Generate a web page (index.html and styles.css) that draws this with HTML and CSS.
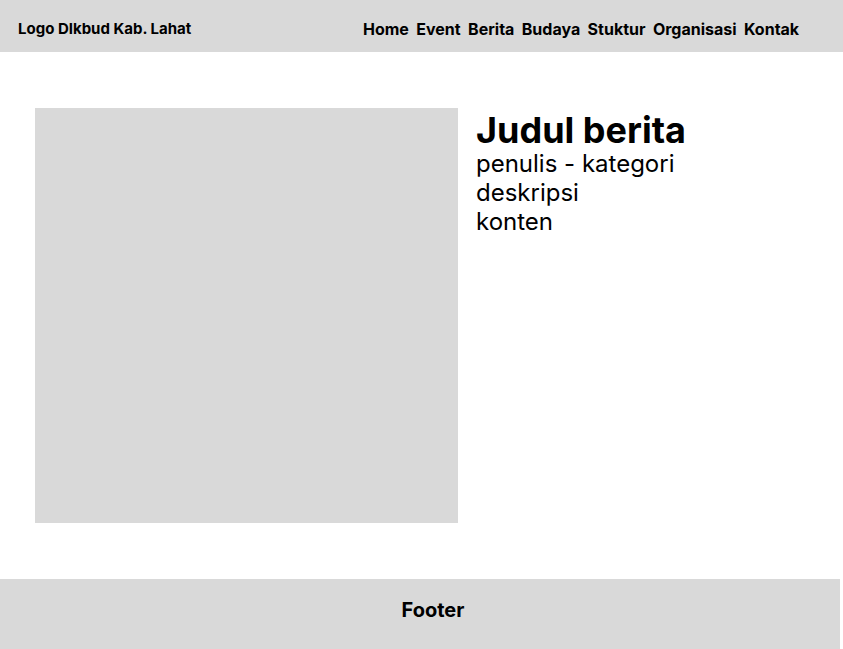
FILE: index.html
```html
<!DOCTYPE html>
<html lang="id">
<head>
<meta charset="utf-8">
<title>Berita - Disbud Kab. Lahat</title>
<link rel="stylesheet" href="styles.css">
</head>
<body>
<header class="topbar">
  <div class="logo">Logo DIkbud Kab. Lahat</div>
  <nav class="nav">
    <a href="#">Home</a>
    <a href="#">Event</a>
    <a href="#">Berita</a>
    <a href="#">Budaya</a>
    <a href="#">Stuktur</a>
    <a href="#">Organisasi</a>
    <a href="#">Kontak</a>
  </nav>
</header>
<main class="article">
  <div class="article-image"></div>
  <div class="article-text">
    <h1 class="title">Judul berita</h1>
    <p class="line">penulis - kategori</p>
    <p class="line">deskripsi</p>
    <p class="line">konten</p>
  </div>
</main>
<footer class="footer">Footer</footer>
</body>
</html>
```
FILE: styles.css
```css
* { box-sizing: border-box; }
html, body { margin: 0; padding: 0; }
body {
  font-family: Inter, "Noto Sans", sans-serif;
  color: #000;
  background: #fff;
  width: 843px;
}
.topbar {
  height: 52px;
  background: #d9d9d9;
  display: flex;
  align-items: center;
  padding-left: 18px;
  padding-top: 5px;
}
.logo {
  font-size: 15px;
  font-weight: 700;
  width: 345px;
  margin-top: -1px;
}
.nav {
  display: flex;
  gap: 7.4px;
}
.nav a {
  color: #000;
  text-decoration: none;
  font-size: 16px;
  font-weight: 700;
}
.article {
  display: flex;
  gap: 18px;
  padding: 56px 35px;
}
.article-image {
  width: 423px;
  height: 415px;
  background: #d9d9d9;
  flex: none;
}
.article-text {
  display: flex;
  flex-direction: column;
  padding-top: 3px;
}
.title {
  margin: 0;
  font-size: 36px;
  font-weight: 700;
  line-height: 38px;
}
.line {
  margin: 0;
  font-size: 24px;
  font-weight: 400;
  line-height: 29px;
}
.footer {
  width: 840px;
  height: 70px;
  background: #d9d9d9;
  display: flex;
  align-items: center;
  justify-content: center;
  padding-left: 26px;
  padding-bottom: 8px;
  font-size: 20px;
  font-weight: 700;
}
```
